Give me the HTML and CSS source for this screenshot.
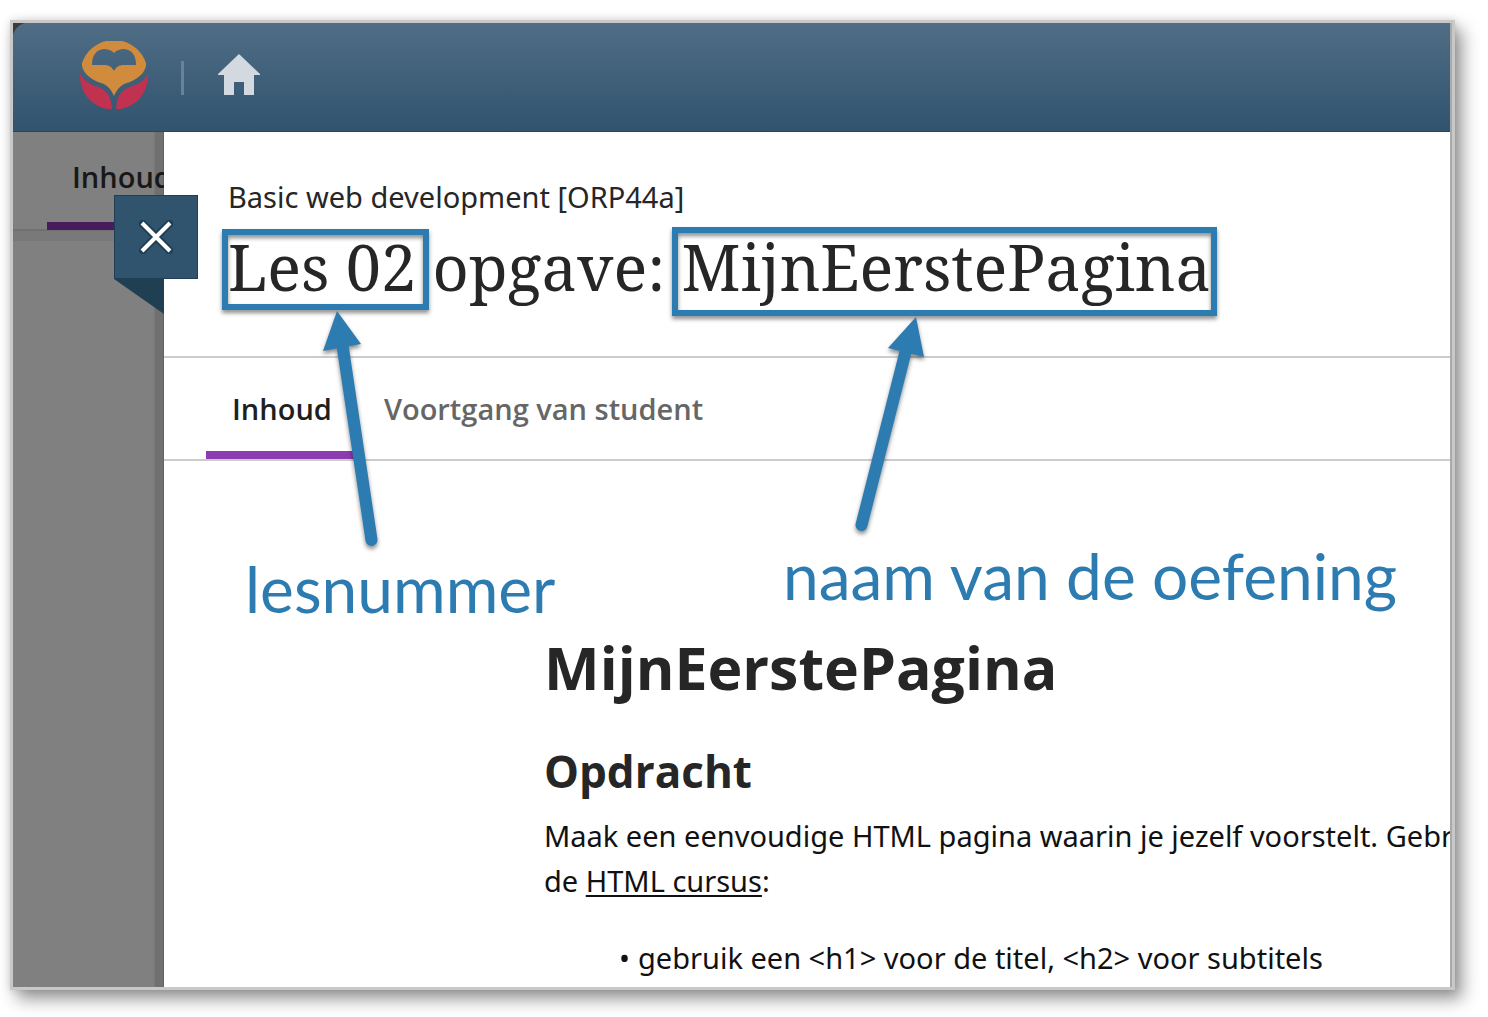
FILE: index.html
```
<!DOCTYPE html>
<html lang="nl">
<head>
<meta charset="utf-8">
<title>Les 02 opgave: MijnEerstePagina</title>
<link rel="stylesheet" href="styles.css">
</head>
<body>
<div class="frame">
  <header class="topbar">
    <a class="logo" href="#" aria-label="Startpagina">
      <svg width="68" height="68" viewBox="0 0 68 68">
        <path fill="#c13250" d="M0 32C3 40 10 43 18 46C28 50 31 55 32 68H28C10 65 -1 50 0 32ZM68 32C65 40 58 43 50 46C40 50 37 55 36 68H40C58 65 69 50 68 32Z"/>
        <path fill="#d18b3c" fill-rule="evenodd" d="M26 0H42C54 3 62 11 66 22C67 29 60 37 50 41C41 43 37 48 34 55C31 48 27 43 18 41C8 37 1 29 2 22C6 11 14 3 26 0ZM34 12C31 9 28 8 24 8C16 9 12 14 12 24L24 24C29 24 32 26 34 30C36 26 39 24 44 24L56 24C56 14 52 9 44 8C40 8 37 9 34 12Z"/>
      </svg>
    </a>
    <span class="divider"></span>
    <a class="home" href="#" aria-label="Home">
      <svg width="42" height="42" viewBox="0 0 42 42"><path fill="#d2d9e0" d="M21 0L42 20V21H36V41H26V28H16V41H6V21H0V20Z"/></svg>
    </a>
  </header>
  <div class="main">
    <aside class="behind">
      <div class="behind-tabs"><a class="behind-tab" href="#">Inhoud</a></div>
      <div class="behind-band"></div>
    </aside>
    <main class="panel">
      <div class="heading">
        <div class="course">Basic web development [ORP44a]</div>
        <h1>Les 02 opgave: MijnEerstePagina</h1>
      </div>
      <nav class="tabs">
        <a class="tab active" href="#">Inhoud</a>
        <a class="tab" href="#">Voortgang van student</a>
      </nav>
      <article class="content">
        <h2>MijnEerstePagina</h2>
        <h3>Opdracht</h3>
        <p>Maak een eenvoudige HTML pagina waarin je jezelf voorstelt. Gebruik<br>de <a href="#">HTML cursus</a>:</p>
        <ul><li>gebruik een &lt;h1&gt; voor de titel, &lt;h2&gt; voor subtitels</li></ul>
      </article>
    </main>
  </div>
  <button class="close" type="button" aria-label="Sluiten">
    <svg width="34" height="34" viewBox="0 0 34 34" fill="none"><path d="M1 1L33 33M33 1L1 33" stroke="#203f54" stroke-width="8"/><path d="M3 3L31 31M31 3L3 31" stroke="#fff" stroke-width="4"/></svg>
  </button>
  <span class="fold"></span>
  <svg class="marks" width="1437" height="640" viewBox="13 23 1437 640">
    <g fill="none" stroke="#2c7bb1" stroke-width="6">
      <rect x="225" y="232" width="201" height="75"/>
      <rect x="675" y="230" width="539" height="83"/>
    </g>
    <g stroke="#2c7bb1" stroke-width="12" stroke-linecap="round">
      <path d="M371.500 540L342 342"/>
      <path d="M861.500 525L906 350"/>
    </g>
    <path fill="#2c7bb1" d="M337 311L361 344L323 351ZM916 317L924 357L888 348Z"/>
  </svg>
  <div class="note note-number">lesnummer</div>
  <div class="note note-name">naam van de oefening</div>
</div>
</body>
</html>
```
FILE: styles.css
```
* { box-sizing: border-box; }
body { margin: 0; padding: 20px 33px 27px 10px; background: #fff; font: 400 29px/45px "Noto Sans", "Open Sans", sans-serif; color: #111; }
a { color: inherit; }

.frame { position: relative; display: flex; flex-direction: column; min-height: calc(100vh - 47px); border: 3px solid #c8c8c8; background: #fff; box-shadow: 7px 9px 16px rgba(0,0,0,.42), 0 0 8px rgba(0,0,0,.12); }

.topbar { display: flex; align-items: center; height: 109px; padding: 0 67px; border-right: 2px solid #aaa; background: radial-gradient(circle at 16px 16px, transparent 16px, #3a3a3a 17px) 0 0 / 16px 16px no-repeat, linear-gradient(#506d85, #30536e); box-shadow: inset 0 -1px #254763; }
.logo, .home { display: flex; margin-bottom: 6px; }
.divider { width: 3px; height: 34px; margin: 0 34px 0 33px; background: #66839a; }

.main { flex: 1; display: grid; grid-template-columns: 151px minmax(0, 1fr); }
.behind { overflow: hidden; background: linear-gradient(90deg, transparent 141px, #707070 142px, #707070 150px, #555 151px), #808080; }
.behind-tabs { height: 99px; padding-left: 34px; border-bottom: 2px solid #707070; }
.behind-tab { display: block; width: 160px; height: 98px; padding: 23px 25px 0; border-bottom: 8px solid #471c5c; font: 600 29px/44px "Open Sans", sans-serif; color: #181818; text-decoration: none; }
.behind-band { height: 10px; background: rgba(0,0,0,.05); }

.panel { overflow: hidden; border-right: 2px solid #aaa; background: #fff; }
.heading { height: 226px; padding: 42px 64px 0; border-bottom: 2px solid #ccc; color: #262626; }
h1 { margin: 0; font: 400 63px/96px "Noto Serif", serif; white-space: nowrap; }

.tabs { display: flex; height: 103px; padding-left: 42px; border-bottom: 2px solid #ccc; font: 600 29px/44px "Open Sans", sans-serif; }
.tab { padding: 29px 26px 0; color: #666; text-decoration: none; white-space: nowrap; }
.active { border-bottom: 8px solid #8d3bb0; color: #1f1f1f; }

.content { padding: 166px 0 0 380px; white-space: nowrap; }
h2, h3 { margin: 0; font-family: "Open Sans", sans-serif; color: #262626; }
h2 { font-size: 59px; line-height: 80px; }
h3 { margin-top: 32px; font-size: 44px; line-height: 64px; }
.content p { margin: 10px 0 32px; }
.content p a { text-decoration-thickness: 2px; text-underline-offset: 3px; }
ul { margin: 0; padding: 0 0 4px 94px; list-style: none; }
li { display: flex; }
li::before { content: "•"; width: 19px; margin-left: -19px; }

.close { position: absolute; left: 101px; top: 172px; display: flex; align-items: center; justify-content: center; width: 84px; height: 84px; padding: 0; border: 1px solid #203f54; background: #30546e; }
.fold { position: absolute; left: 101px; top: 256px; width: 50px; height: 35px; background: #213f53; clip-path: polygon(0 0, 100% 0, 100% 100%); }

.marks { position: absolute; left: 0; top: 0; pointer-events: none; filter: drop-shadow(0 3px 2px rgba(0,0,0,.45)); }
.note { position: absolute; font: 400 64px/80px Lato, sans-serif; color: #2c7bb1; white-space: nowrap; }
.note-number { left: 232px; top: 526px; }
.note-name { left: 770px; top: 513px; }
```
